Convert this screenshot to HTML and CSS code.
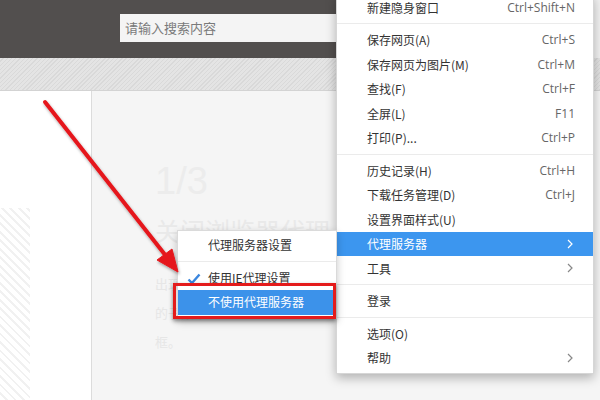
FILE: index.html
```html
<!DOCTYPE html>
<html lang="zh-CN">
<head>
  <meta charset="UTF-8">
  <title>代理服务器设置</title>
  <link rel="stylesheet" href="styles.css">
</head>
<body>
  <div class="page">
    <header class="topbar">
      <div class="search">请输入搜索内容</div>
      <div class="topbar-edge"></div>
    </header>
    <div class="band"></div>
    <div class="content">
      <aside class="side">
        <div class="side-hatch"></div>
      </aside>
      <main class="main">
        <div class="step">1/3</div>
        <div class="step-title">关闭浏览器代理</div>
        <p class="step-text">出现菜单</p>
        <p class="step-text">的子菜单</p>
        <p class="step-text">框。</p>
      </main>
    </div>

    <!-- main browser menu -->
    <div class="menu">
      <div class="item"><span>新建隐身窗口</span><span class="key">Ctrl+Shift+N</span></div>
      <div class="sep"></div>
      <div class="item"><span>保存网页(A)</span><span class="key">Ctrl+S</span></div>
      <div class="item"><span>保存网页为图片(M)</span><span class="key">Ctrl+M</span></div>
      <div class="item"><span>查找(F)</span><span class="key">Ctrl+F</span></div>
      <div class="item"><span>全屏(L)</span><span class="key">F11</span></div>
      <div class="item"><span>打印(P)...</span><span class="key">Ctrl+P</span></div>
      <div class="sep"></div>
      <div class="item"><span>历史记录(H)</span><span class="key">Ctrl+H</span></div>
      <div class="item"><span>下载任务管理(D)</span><span class="key">Ctrl+J</span></div>
      <div class="item"><span>设置界面样式(U)</span></div>
      <div class="item active"><span>代理服务器</span>
        <svg class="chev" width="6" height="10" viewBox="0 0 6 10"><path d="M1 1l4 4-4 4" fill="none" stroke="currentColor" stroke-width="1.2"/></svg>
      </div>
      <div class="item"><span>工具</span>
        <svg class="chev" width="6" height="10" viewBox="0 0 6 10"><path d="M1 1l4 4-4 4" fill="none" stroke="currentColor" stroke-width="1.2"/></svg>
      </div>
      <div class="sep"></div>
      <div class="item"><span>登录</span></div>
      <div class="sep"></div>
      <div class="item"><span>选项(O)</span></div>
      <div class="item"><span>帮助</span>
        <svg class="chev" width="6" height="10" viewBox="0 0 6 10"><path d="M1 1l4 4-4 4" fill="none" stroke="currentColor" stroke-width="1.2"/></svg>
      </div>
    </div>

    <!-- proxy submenu -->
    <div class="submenu">
      <div class="sub-item">代理服务器设置</div>
      <div class="sep"></div>
      <div class="sub-item">
        <svg class="check" width="14" height="12" viewBox="0 0 14 12"><path d="M1.5 6.5l3.5 3.5 7.5-8.5" fill="none" stroke="#3a86de" stroke-width="2.4"/></svg>
        使用IE代理设置
      </div>
      <div class="sub-item active">不使用代理服务器</div>
    </div>

    <div class="mark"></div>

    <svg class="arrow" width="600" height="400" viewBox="0 0 600 400">
      <defs>
        <filter id="shadow" x="-20%" y="-20%" width="140%" height="140%">
          <feDropShadow dx="1" dy="2" stdDeviation="1.5" flood-color="#000" flood-opacity="0.35"/>
        </filter>
      </defs>
      <g filter="url(#shadow)" fill="#e5161b" stroke="#e5161b">
        <line x1="45" y1="102" x2="166" y2="256" stroke-width="4" stroke-linecap="round"/>
        <polygon points="178,272 157,260 172,249" stroke-width="1" stroke-linejoin="round"/>
      </g>
    </svg>
  </div>
</body>
</html>
```

FILE: styles.css
```css
body {
  margin: 0;
  font-family: "Noto Sans CJK SC", "Noto Sans", sans-serif;
  font-size: 12px;
  color: #333;
}
.page {
  position: relative;
  width: 600px;
  height: 400px;
  overflow: hidden;
  background: #f5f5f5;
}
.topbar {
  display: flex;
  height: 58px;
  background: #524f4e;
}
.search {
  margin: 14px 0 0 120px;
  width: 211px;
  height: 28px;
  padding-left: 5px;
  line-height: 28px;
  font-size: 13px;
  color: #7a7a7a;
  background: #f4f4f4;
}
.topbar-edge {
  margin-left: auto;
  width: 8px;
  background: #f2f2f2;
}
.band {
  height: 32px;
  border-bottom: 1px solid #d3d3d3;
  background: repeating-linear-gradient(135deg, #e4e4e4 0, #e4e4e4 2px, #d9d9d9 2px, #d9d9d9 3px);
}
.content {
  display: flex;
  height: 309px;
}
.side {
  width: 91px;
  border-right: 1px solid #dcdcdc;
  background: #fff;
}
.side-hatch {
  margin-top: 117px;
  width: 30px;
  height: 192px;
  background: repeating-linear-gradient(45deg, #fff 0, #fff 4px, #f1f1f1 4px, #f1f1f1 6px);
}
.main {
  flex: 1;
  padding: 70px 0 0 63px;
  background: #f5f5f5;
}
.step {
  font-family: "Liberation Sans", sans-serif;
  font-size: 38px;
  line-height: 40px;
  color: #ececec;
}
.step-title {
  margin-top: 12px;
  font-size: 25px;
  line-height: 34px;
  color: #e9e9e9;
  white-space: nowrap;
}
.step-text {
  margin: 0;
  font-size: 13px;
  line-height: 29px;
  color: #e6e6e6;
  white-space: nowrap;
}
.step-text:first-of-type {
  margin-top: 22px;
}

/* browser menu */
.menu {
  position: absolute;
  left: 336px;
  top: -6px;
  width: 256px;
  padding-bottom: 3px;
  border: 1px solid #d6d6d6;
  background: #fff;
  box-shadow: 0 4px 10px rgba(0, 0, 0, 0.28);
}
.item {
  display: flex;
  align-items: center;
  justify-content: space-between;
  height: 24.5px;
  padding: 0 18px 0 30px;
}
.key {
  font-family: "Open Sans", sans-serif;
  font-size: 12px;
  color: #666;
}
.chev {
  margin-right: 2px;
  color: #888;
}
.item.active {
  background: #3c96ef;
  color: #fff;
}
.item.active .chev {
  color: #fff;
}
.sep {
  height: 1px;
  margin: 3.5px 0;
  background: #ebebeb;
}

/* proxy submenu */
.submenu {
  position: absolute;
  left: 177px;
  top: 230px;
  width: 158px;
  padding: 2px 0 3px;
  border: 1px solid #dadada;
  background: #fff;
  box-shadow: 0 3px 8px rgba(0, 0, 0, 0.22);
}
.sub-item {
  position: relative;
  height: 24.5px;
  line-height: 24.5px;
  padding-left: 30px;
  white-space: nowrap;
}
.sub-item.active {
  background: #3c92ea;
  color: #fff;
}
.check {
  position: absolute;
  left: 9px;
  top: 7px;
}
.mark {
  position: absolute;
  left: 173px;
  top: 283px;
  width: 157px;
  height: 30px;
  border: 3px solid #e41b1b;
  box-shadow: 0 2px 4px rgba(0, 0, 0, 0.45);
}
.arrow {
  position: absolute;
  left: 0;
  top: 0;
  pointer-events: none;
}
```
